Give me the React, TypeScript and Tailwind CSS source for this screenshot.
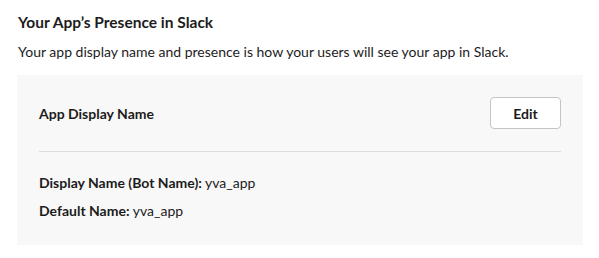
export default function App() {
  return (
    <div className="bg-white w-[599px] h-[258px] pl-[17px] pr-[16px] pt-[10px] text-[#1d1c1d]" style={{ fontFamily: "Lato, 'Liberation Sans', sans-serif" }}>
      <h2 className="text-[15.5px] font-bold leading-[24px] pl-px">Your App’s Presence in Slack</h2>
      <p className="text-[14px] leading-[22px] mt-[7px] pl-px">
        Your app display name and presence is how your users will see your app in Slack.
      </p>
      <div className="mt-[12px] bg-[#f8f8f8] px-[22px] pt-[22px] pb-[23px]">
        <div className="flex items-center justify-between">
          <span className="text-[14px] font-bold">App Display Name</span>
          <button className="w-[71px] h-[32px] bg-white border border-[#c4c4c4] rounded-[4px] text-[14px] font-bold">
            Edit
          </button>
        </div>
        <div className="h-px bg-[#dddddd] mt-[22px]" />
        <div className="mt-[20px] flex flex-col gap-[6px] text-[14px] leading-[22px]">
          <div>
            <span className="font-bold">Display Name (Bot Name):</span> yva_app
          </div>
          <div>
            <span className="font-bold">Default Name:</span> yva_app
          </div>
        </div>
      </div>
    </div>
  );
}
